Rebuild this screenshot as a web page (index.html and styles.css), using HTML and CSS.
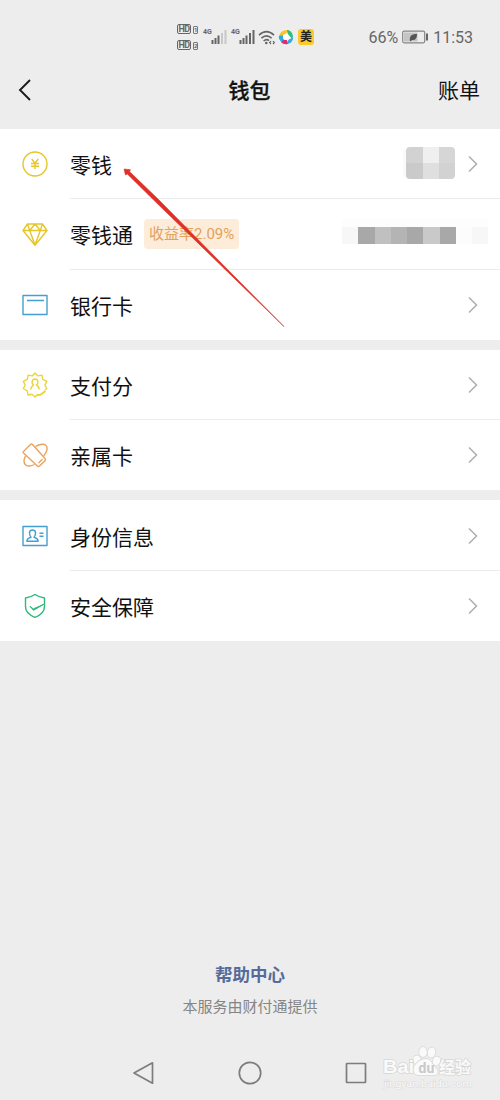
FILE: index.html
```html
<!DOCTYPE html>
<html lang="zh-CN">
<head>
    <meta charset="utf-8">
    <title>钱包</title>
    <link rel="stylesheet" href="styles.css">
</head>
<body>
    <div class="status-bar">
        <div class="hd-list">
            <div class="hd"><span class="hd-box">HD</span><span class="sim">1</span></div>
            <div class="hd"><span class="hd-box">HD</span><span class="sim">2</span></div>
        </div>
        <div class="signal">
            <span class="net">4G</span>
            <svg width="16" height="16" viewBox="0 0 16 16">
                <path d="M1.5 11v4M4.5 9v6M7.5 6.5v8.5" stroke="#666" stroke-width="2"/>
                <path d="M11 4v11M14.5 1v14" stroke="#c8c8c8" stroke-width="2"/>
            </svg>
        </div>
        <div class="signal">
            <span class="net">4G</span>
            <svg width="16" height="16" viewBox="0 0 16 16">
                <path d="M1.5 11v4M4.5 9v6M7.5 6.5v8.5M11 4v11M14.5 1v14" stroke="#666" stroke-width="2"/>
            </svg>
        </div>
        <svg class="wifi" width="18" height="15" viewBox="0 0 18 15" fill="none" stroke="#666" stroke-width="1.6">
            <path d="M1 5.2Q8.500-1.800 16 5.200M3.400 8.200Q8.500 3.400 13.600 8.200M5.600 11Q8.500 8.400 11 10.600"/>
            <circle cx="8.300" cy="13" r="1.300" fill="#666" stroke="none"/>
            <path d="M13 11.200l-1.300 1.400 1.300 1.400M15 11.200l1.300 1.400-1.300 1.400" stroke-width="1.200"/>
        </svg>
        <svg class="app-logo" width="16" height="16" viewBox="0 0 16 16">
            <circle cx="8" cy="8" r="7.500" fill="#fff"/>
            <path d="M1 7a7 7 0 0 1 7-6l3 .4-5 5z" fill="#f5c52c"/>
            <path d="M9 .7A7.400 7.400 0 0 1 15 7l-.8 3-4.500-5z" fill="#32bd79"/>
            <path d="M15.300 8A7.400 7.400 0 0 1 8 15.300l2.500-4.500z" fill="#35a9e0"/>
            <path d="M9.600 15A7.400 7.400 0 0 1 3 13.300l1.500-3 4.500.8z" fill="#e02b6a"/>
            <path d="M.7 7l4-1 1 5-2.700 2A7.400 7.400 0 0 1 .7 7z" fill="#2eaadc"/>
            <circle cx="8" cy="8" r="3" fill="#fff"/>
        </svg>
        <span class="app-badge">美</span>
        <span class="percent">66%</span>
        <svg class="battery" width="26" height="14" viewBox="0 0 26 14">
            <rect x=".7" y="1.200" width="22" height="11.600" rx="1.500" fill="#ededed" stroke="#858585" stroke-width="1.200"/>
            <path d="M2 2.500h13.500v9H2z" fill="#c5c5c5"/>
            <path d="M24 3.500h2v7h-2z" fill="#666"/>
            <path d="M8 11c-.8-4.500 1-7 7-7 0 4.500-1.800 6.400-5 6L8.800 11.300z" fill="#555"/>
        </svg>
        <span class="time">11:53</span>
    </div>

    <div class="nav-bar">
        <svg class="back" width="14" height="24" viewBox="0 0 14 24" fill="none" stroke="#1b1b1b" stroke-width="1.900">
            <path d="M12 2L2 12l10 10"/>
        </svg>
        <h1>钱包</h1>
        <span class="bill">账单</span>
    </div>

    <div class="group">
        <div class="row">
            <svg class="icon yellow" viewBox="0 0 28 28">
                <circle cx="14" cy="14" r="12"/>
                <path d="M10.700 9l3.300 4.300L17.300 9M14 13.300V19M10 13.500h8M10 16.300h8"/>
            </svg>
            <div class="cell">
                <span class="label">零钱</span>
                <div class="mosaic balance">
                    <i class="c2"></i><i class="c5"></i><i class="c3"></i>
                    <i class="c1"></i><i class="c4"></i><i class="c2"></i>
                </div>
                <svg class="arrow" viewBox="0 0 10 18"><path d="M1 1.500L8.500 9 1 16.500"/></svg>
            </div>
        </div>
        <div class="row">
            <svg class="icon yellow" viewBox="0 0 28 28">
                <path d="M6.500 4h15L26 10.500 14 25.300 2 10.500zM2 10.500h24M8.700 10.500L14 25M19.300 10.500L14 25M6.500 4l2.200 6.500L14 4l5.300 6.500L21.500 4"/>
            </svg>
            <div class="cell">
                <span class="label">零钱通</span>
                <span class="rate">收益率2.09%</span>
                <div class="mosaic income">
                    <i class="c7"></i><i class="d1"></i><i class="d3"></i><i class="d2"></i><i class="d1"></i><i class="d4"></i><i class="d1"></i><i class="c8"></i><i class="c7"></i>
                </div>
            </div>
        </div>
        <div class="row">
            <svg class="icon blue" viewBox="0 0 28 28">
                <path d="M2 4.500h24v19H2zM6 9.500h17"/>
            </svg>
            <div class="cell">
                <span class="label">银行卡</span>
                <svg class="arrow" viewBox="0 0 10 18"><path d="M1 1.500L8.500 9 1 16.500"/></svg>
            </div>
        </div>
    </div>

    <div class="group">
        <div class="row">
            <svg class="icon lemon" viewBox="0 0 28 28">
                <path d="M16.500 23.500L14 26l-3-2.700-4 .7-.7-4-4-2.500 2-3.500-2-3.700 4-2 .9-4.200 4 .8L14 2l3 2.900 4-.8.8 4.200 4 2-2 3.700 2 3.500-2 1.500"/>
                <path d="M16 24l3.500-.3 5-3.700" stroke-width="2"/>
                <path d="M9.800 18.500q.2-2.700 2.800-4.600-1.900-1-1.500-3.400.6-2.500 2.900-2.500t2.900 2.500q.4 2.400-1.500 3.400 2.600 1.900 2.800 4.600"/>
            </svg>
            <div class="cell">
                <span class="label">支付分</span>
                <svg class="arrow" viewBox="0 0 10 18"><path d="M1 1.500L8.500 9 1 16.500"/></svg>
            </div>
        </div>
        <div class="row">
            <svg class="icon orange" viewBox="0 0 28 28">
                <path d="M2.500 10.500l7-7q1-1 2 0L24 17.500q1 1.200 0 2.200L18.500 25q-1.300 1-2.400-.2L2.500 12q-.8-.8 0-1.500z"/>
                <path d="M14.500 5.500c3-2 8-3 10-1.500 2.500 2 1.500 6.500-1.800 11M13.500 23.500c-3 1.700-7 2-8.800.4C2.500 22 2.700 18.500 4.500 15M17.500 22l4-3.700"/>
            </svg>
            <div class="cell">
                <span class="label">亲属卡</span>
                <svg class="arrow" viewBox="0 0 10 18"><path d="M1 1.500L8.500 9 1 16.500"/></svg>
            </div>
        </div>
    </div>

    <div class="group">
        <div class="row">
            <svg class="icon blue" viewBox="0 0 28 28">
                <path d="M2 4.500h24v19H2zM18.500 11.200h4M18.500 14.200h4"/>
                <path d="M6 19.300c-.4-2.600 1.400-2.900 4-4-1.300-1.400-1.700-3-1.500-5 .3-1.800 1.500-2.300 3-2.300s2.700.5 3 2.300c.2 2-.2 3.600-1.500 5 2.600 1.100 4.400 1.400 4 4z"/>
            </svg>
            <div class="cell">
                <span class="label">身份信息</span>
                <svg class="arrow" viewBox="0 0 10 18"><path d="M1 1.500L8.500 9 1 16.500"/></svg>
            </div>
        </div>
        <div class="row">
            <svg class="icon green" viewBox="0 0 28 28">
                <path d="M14 2.500c3 2 6 3 9.500 3.500v8.500c0 5-4 8.700-9.500 10.800C8.500 23.200 4.500 19.500 4.500 14.500V6c3.500-.5 6.500-1.500 9.500-3.500z"/>
                <path d="M9 14.300l3.300 2.600 10.500-4.600-10.300 6z" fill="#2db87c" stroke-width="1"/>
            </svg>
            <div class="cell">
                <span class="label">安全保障</span>
                <svg class="arrow" viewBox="0 0 10 18"><path d="M1 1.500L8.500 9 1 16.500"/></svg>
            </div>
        </div>
    </div>

    <div class="footer">
        <a class="help">帮助中心</a>
        <p>本服务由财付通提供</p>
    </div>

    <div class="system-nav">
        <svg width="24" height="24" viewBox="0 0 24 24"><path d="M20.500 1.800v20.400L2 12z"/></svg>
        <svg width="24" height="24" viewBox="0 0 24 24"><circle cx="12" cy="12" r="10.700"/></svg>
        <svg width="24" height="24" viewBox="0 0 24 24"><rect x="2.500" y="2.500" width="19" height="19" rx=".5"/></svg>
    </div>

    <!-- pointer to the balance row -->
    <svg class="pointer" width="162" height="160" viewBox="0 0 162 160">
        <path d="M1 1l6.500.8-1 1.800L35 31 161 158.600 33 34.300 4.300 6 2.500 7z" fill="#dd3027" stroke="#dd3027" stroke-width=".6"/>
    </svg>

    <div class="watermark">
        <svg width="92" height="48" viewBox="0 0 92 48">
            <g class="paw">
                <ellipse cx="35" cy="15" rx="3.600" ry="4.500" transform="rotate(-15 35 15)"/>
                <ellipse cx="41" cy="7" rx="3.800" ry="5"/>
                <ellipse cx="49.500" cy="7.500" rx="3.800" ry="5" transform="rotate(10 49.500 7.500)"/>
                <ellipse cx="54.500" cy="16" rx="3.600" ry="4.500" transform="rotate(15 54.500 16)"/>
                <path d="M44 14c5 0 6 5 9 8s4 8 0 8-14 0-17 0-6-4-4-8 6-8 12-8z"/>
            </g>
            <text class="baidu" x="1" y="28" textLength="31" lengthAdjust="spacingAndGlyphs">Bai</text>
            <text class="du" x="36.500" y="27.500">du</text>
            <text class="exp" x="57" y="28">经验</text>
            <text class="site" x="2" y="42" textLength="88" lengthAdjust="spacingAndGlyphs">jingyan.baidu.com</text>
        </svg>
    </div>
</body>
</html>
```

FILE: styles.css
```css
* {
    box-sizing: border-box;
}

body {
    position: relative;
    display: flex;
    flex-direction: column;
    width: 500px;
    height: 1100px;
    margin: 0;
    background-color: #ededed;
    color: #111;
    font-family: Roboto, "Noto Sans CJK SC", sans-serif;
    overflow: hidden;
}

svg {
    display: block;
    flex-shrink: 0;
}

.status-bar {
    display: flex;
    align-items: center;
    height: 58px;
    padding: 16px 27px 0 177px;
    color: #666;
}

.hd-list {
    display: flex;
    flex-direction: column;
    gap: 6px;
    width: 26px;
}

.hd {
    display: flex;
    align-items: flex-end;
    gap: 2px;
    height: 10px;
}

.hd-box {
    width: 14px;
    height: 10px;
    border: 1px solid #666;
    border-radius: 2px;
    font-size: 9px;
    font-weight: 700;
    line-height: 8px;
    text-align: center;
    letter-spacing: -.5px;
}

.sim {
    width: 5px;
    height: 8px;
    border: 1px solid #777;
    border-radius: 1px;
    font-size: 6px;
    font-weight: 700;
    line-height: 6px;
    text-align: center;
}

.signal {
    display: flex;
    width: 28px;
}

.net {
    width: 8px;
    font-size: 7px;
    font-weight: 700;
    line-height: 7px;
}

.wifi {
    margin-left: -1px;
}

.app-logo {
    margin-left: 2px;
}

.app-badge {
    width: 16px;
    height: 16px;
    margin-left: 4px;
    border-radius: 3px;
    background-color: #fbcb2d;
    color: #222;
    font-size: 12px;
    font-weight: 700;
    line-height: 16px;
    text-align: center;
}

.percent,
.time {
    font-size: 16px;
}

.percent {
    margin-left: auto;
}

.battery {
    margin: 0 5px 0 4px;
}

.nav-bar {
    display: grid;
    grid-template-columns: 1fr auto 1fr;
    align-items: center;
    height: 71px;
    padding: 0 20px 10px 18px;
}

.back {
    margin-top: 2px;
}

.nav-bar h1 {
    margin: 0;
    padding-left: 1px;
    font-size: 21px;
    font-weight: 500;
    -webkit-text-stroke: .3px #111;
}

.bill {
    justify-self: end;
    font-size: 21px;
}

.group {
    margin-bottom: 10px;
    background-color: #fff;
}

.row {
    display: flex;
    align-items: center;
    height: 70.3px;
    padding-left: 21px;
}

.icon {
    width: 28px;
    height: 28px;
    margin-right: 21px;
    fill: none;
    stroke: currentColor;
    stroke-width: 1.4;
    stroke-linejoin: round;
}

.yellow {
    color: #e5c62b;
}

.lemon {
    color: #ecd437;
}

.blue {
    color: #459fd0;
}

.orange {
    color: #eba35b;
}

.green {
    color: #2db87c;
}

.cell {
    display: flex;
    align-items: center;
    flex: 1;
    height: 100%;
    padding: 1px 22px 0 0;
    border-bottom: 1px solid #ececec;
}

.row:last-child .cell {
    padding-top: 0;
    border-bottom: none;
}

.label {
    font-size: 21px;
}

.rate {
    height: 30px;
    margin-left: 11px;
    padding: 0 5px;
    border-radius: 4px;
    background-color: #fdecd9;
    color: #e1a25b;
    font-size: 15px;
    line-height: 31px;
}

.arrow {
    width: 10px;
    height: 18px;
    margin-left: auto;
    fill: none;
    stroke: #b0b0b0;
    stroke-width: 1.6;
}

.mosaic {
    display: grid;
    margin-left: auto;
}

.balance {
    grid-template-columns: 17px 16px 16px;
    grid-template-rows: 16px 16px;
    margin: -2px 13px 0 auto;
    border-radius: 4px;
    overflow: hidden;
    box-shadow: -5px 0 0 -2px #fafafa;
}

.balance + .arrow {
    margin-left: 0;
}

.income {
    grid-template-columns: 16px 17px repeat(3, 16px) 17px repeat(3, 16px);
    grid-template-rows: 17px;
    margin: 2px -10px 0 auto;
    box-shadow: 0 -8px 0 #fdfdfd;
}

.c1 { background-color: #cacaca; }
.c2 { background-color: #d2d2d2; }
.c3 { background-color: #d6d6d6; }
.c4 { background-color: #dfdfdf; }
.c5 { background-color: #efefef; }
.c7 { background-color: #f7f7f7; }
.c8 { background-color: #fcfcfc; }
.d1 { background-color: #a8a8a8; }
.d2 { background-color: #b4b4b4; }
.d3 { background-color: #c0c0c0; }
.d4 { background-color: #c9c9c9; }

.footer {
    margin-top: auto;
    padding-bottom: 27px;
    text-align: center;
}

.help {
    display: block;
    color: #566b9b;
    font-size: 17.5px;
    font-weight: 700;
    line-height: 26px;
}

.footer p {
    margin: 8px 0 0;
    color: #858585;
    font-size: 15px;
    line-height: 22px;
}

.system-nav {
    display: flex;
    gap: 82px;
    height: 55px;
    padding: 16px 0 0 132px;
    fill: none;
    stroke: #7d7d7d;
    stroke-width: 1.7;
    stroke-linejoin: round;
}

.pointer {
    position: absolute;
    top: 168px;
    left: 123px;
}

.watermark {
    position: absolute;
    top: 1045px;
    left: 382px;
}

.watermark text,
.paw {
    fill: #fafafa;
    stroke: #d6d6d6;
    stroke-width: 1.4;
    paint-order: stroke;
}

.watermark .baidu {
    font-family: "Liberation Sans", sans-serif;
    font-size: 18px;
    font-weight: 700;
}

.watermark .du {
    fill: #c9c9c9;
    stroke: none;
    font-size: 14px;
    font-weight: 700;
}

.exp {
    font-size: 16px;
    font-weight: 700;
}

.watermark .site {
    stroke: #dcdcdc;
    stroke-width: 1;
    font-size: 9px;
}
```
